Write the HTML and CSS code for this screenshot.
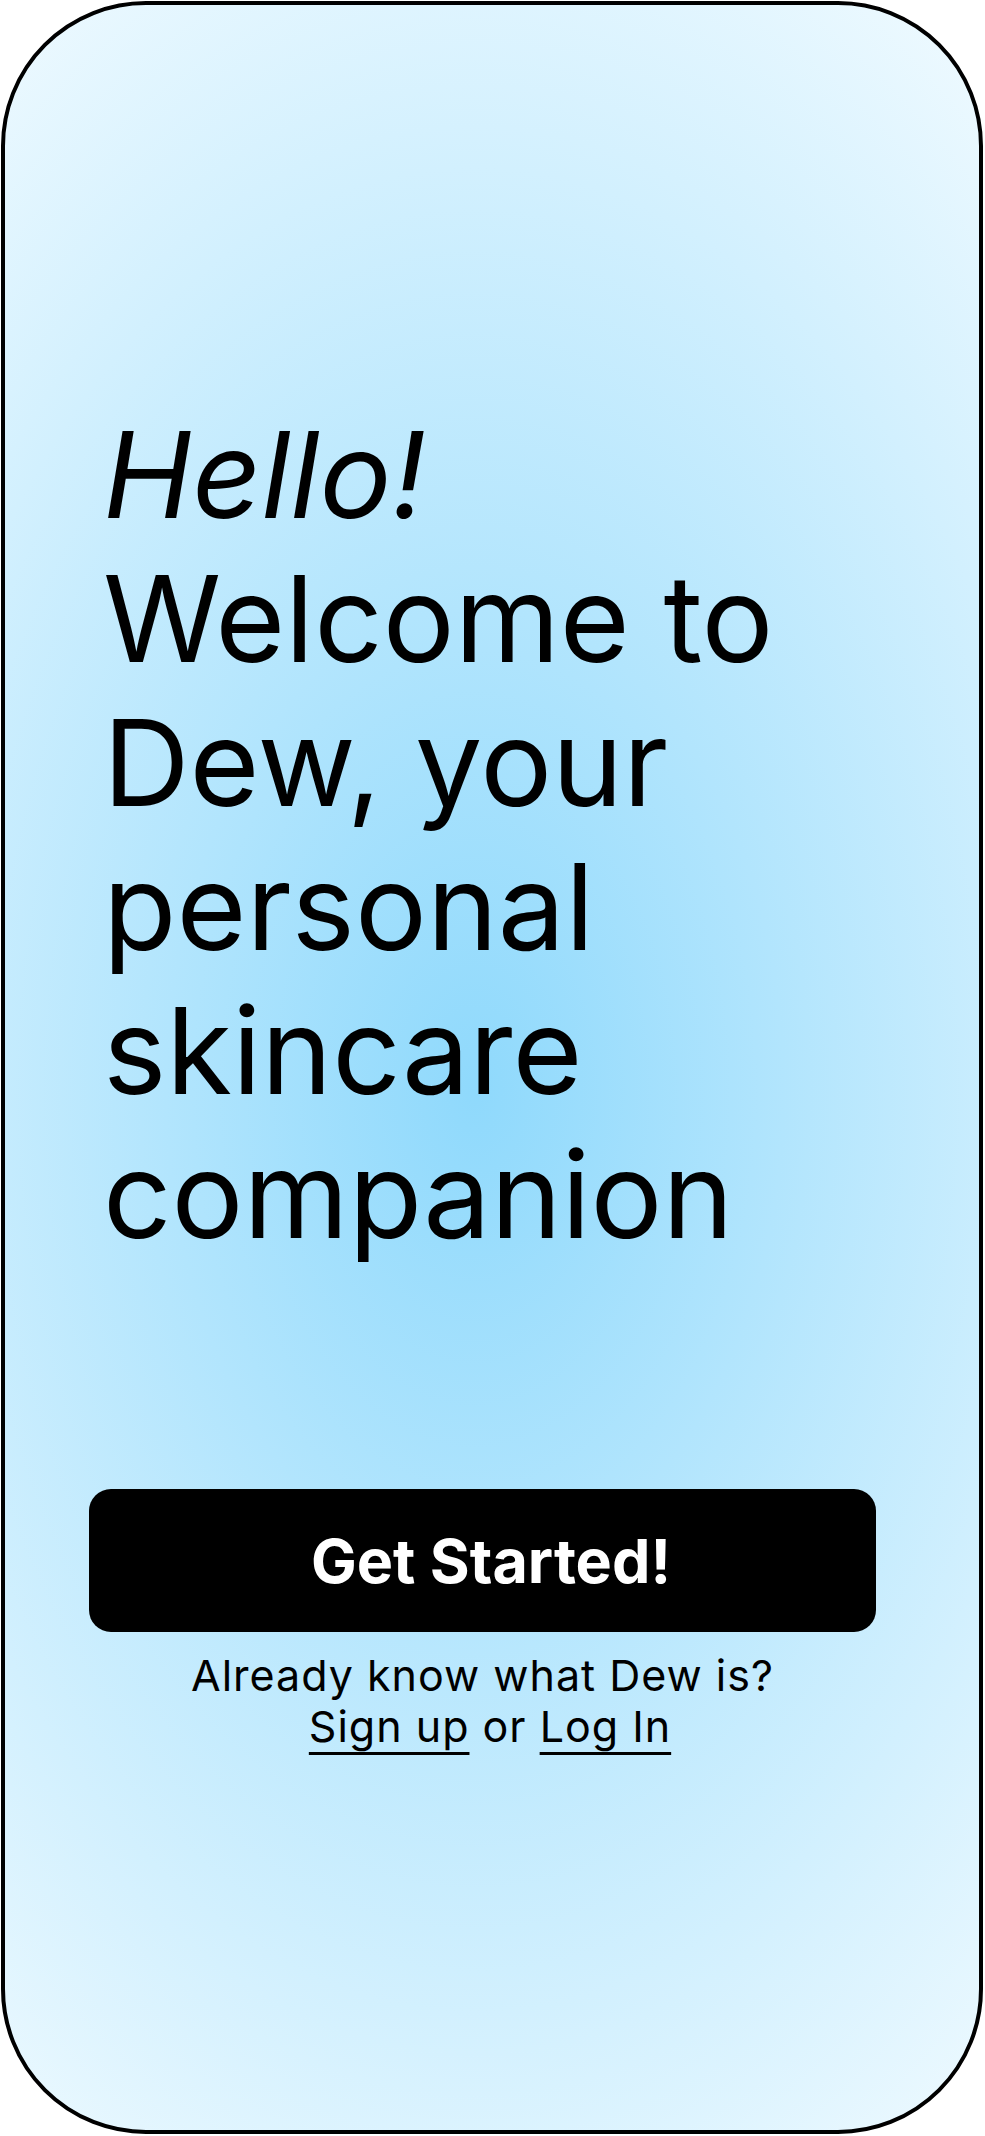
FILE: index.html
```html
<!DOCTYPE html>
<html lang="en">
<head>
<meta charset="utf-8">
<title>Dew – Welcome</title>
<link rel="stylesheet" href="styles.css">
</head>
<body>
  <main class="phone">
    <h1 class="welcome">
      <em class="welcome-hello">Hello!</em>
      <span class="welcome-text">Welcome to Dew, your personal skincare companion</span>
    </h1>
    <button class="cta" type="button">Get Started!</button>
    <p class="auth">
      <span class="auth-line">Already know what Dew is?</span>
      <span class="auth-line auth-links"><a href="#" class="auth-link">Sign up</a> or <a href="#" class="auth-link">Log In</a></span>
    </p>
  </main>
</body>
</html>
```

FILE: styles.css
```css
* {
  box-sizing: border-box;
}

html, body {
  margin: 0;
  padding: 0;
  background: #ffffff;
}

body {
  font-family: "Inter", "Noto Sans", sans-serif;
  color: #000000;
}

.phone {
  margin: 1px;
  width: 982px;
  height: 2133px;
  border: 4px solid #000000;
  border-radius: 145px;
  overflow: hidden;
  display: flex;
  flex-direction: column;
  align-items: flex-start;
  background-color: #f3fbff;
  background-image: radial-gradient(ellipse 900px 1404px at 470px 1085px, #8fd9fc 0%, #f5fcff 100%);
}

.welcome {
  margin: 398px 0 0 98px;
  width: 760px;
  font-size: 120px;
  line-height: 144px;
  font-weight: 400;
  letter-spacing: 0;
}

.welcome-hello {
  display: block;
  font-style: italic;
}

.welcome-text {
  display: block;
}

.cta {
  margin: 222px 0 0 84px;
  width: 787px;
  height: 143px;
  border: 0;
  border-radius: 22px;
  background: #000000;
  color: #ffffff;
  font-family: "Inter", "Noto Sans", sans-serif;
  font-size: 61px;
  font-weight: 700;
  line-height: normal;
  padding: 0 0 0 17px;
  display: flex;
  align-items: center;
  justify-content: center;
  cursor: pointer;
}

.auth {
  margin: 18px 0 0 84px;
  width: 787px;
  text-align: center;
  font-size: 43px;
  line-height: 51px;
  letter-spacing: 1px;
}

.auth-line {
  display: block;
}

.auth-links {
  padding-left: 15px;
}

.auth-link {
  color: #000000;
  text-decoration: underline;
  text-decoration-thickness: 3px;
  text-underline-offset: 10px;
}
```
